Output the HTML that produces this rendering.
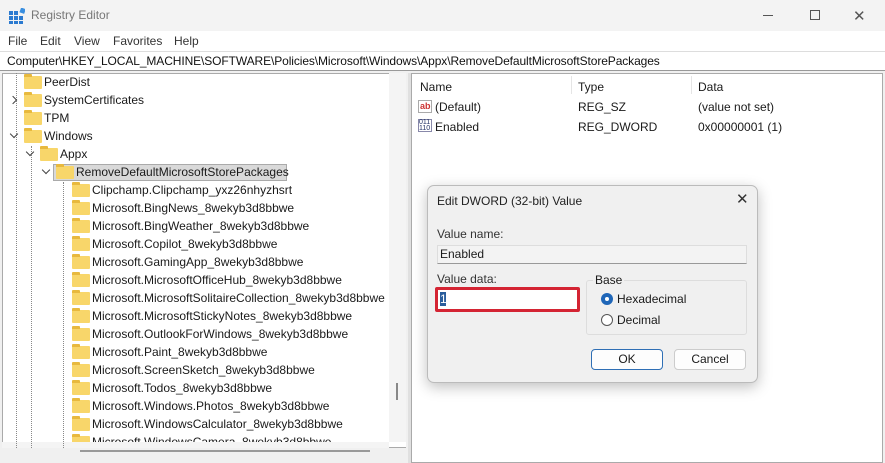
<!DOCTYPE html>
<html><head><style>
*{margin:0;padding:0;box-sizing:border-box}
body{width:885px;height:463px;background:#f0f0f0;font-family:"Liberation Sans",sans-serif;font-size:12px;color:#1a1a1a;position:relative;overflow:hidden}
.a{position:absolute;white-space:nowrap}
.f{position:absolute;width:18px;height:13px;background:#f8d66a;border-radius:1px}
.f:before{content:"";position:absolute;left:0;top:-2px;width:8px;height:3px;background:#e8b93e;border-radius:1px 1px 0 0}
.t{position:absolute;white-space:nowrap;font-size:12px;line-height:16px}
.chev{position:absolute;width:6px;height:6px;border-right:1.3px solid #444;border-bottom:1.3px solid #444}
</style></head><body>
<div class="a" style="left:0;top:0;width:885px;height:31px;background:#f3f3f3"></div>
<svg class="a" style="left:9px;top:8px" width="16" height="16"><rect x="0" y="3" width="4" height="4" fill="#2b7ad0"/><rect x="5" y="3" width="4" height="4" fill="#2b7ad0"/><rect x="0" y="8" width="4" height="4" fill="#2b7ad0"/><rect x="5" y="8" width="4" height="4" fill="#2b7ad0"/><rect x="10" y="8" width="4" height="4" fill="#2b7ad0"/><rect x="0" y="13" width="4" height="3" fill="#2b7ad0"/><rect x="5" y="13" width="4" height="3" fill="#2b7ad0"/><rect x="10" y="13" width="4" height="3" fill="#2b7ad0"/><rect x="11" y="0" width="5" height="5" fill="#3a8fe0" transform="rotate(20 13 3)"/></svg>
<div class="a" style="left:31px;top:8px;font-size:12px;color:#777">Registry Editor</div>
<div class="a" style="left:763px;top:15px;width:10px;height:1px;background:#555"></div>
<div class="a" style="left:810px;top:10px;width:10px;height:10px;border:1px solid #555"></div>
<div class="a" style="left:853px;top:7px;font-size:15px;color:#555">✕</div>
<div class="a" style="left:0;top:31px;width:885px;height:20px;background:#fff"></div>
<div class="a" style="left:8px;top:34px;color:#333">File</div>
<div class="a" style="left:40px;top:34px;color:#333">Edit</div>
<div class="a" style="left:74px;top:34px;color:#333">View</div>
<div class="a" style="left:113px;top:34px;color:#333">Favorites</div>
<div class="a" style="left:174px;top:34px;color:#333">Help</div>
<div class="a" style="left:0;top:51px;width:885px;height:20px;background:#fff;border-top:1px solid #ddd;border-bottom:1px solid #999"></div>
<div class="a" style="left:7px;top:54px;color:#111;letter-spacing:-0.1px">Computer\HKEY_LOCAL_MACHINE\SOFTWARE\Policies\Microsoft\Windows\Appx\RemoveDefaultMicrosoftStorePackages</div>
<div class="a" style="left:2px;top:73px;width:404px;height:375px;background:#fff;border:1px solid #aaa;border-right:none"></div>
<div class="a" style="left:389px;top:73px;width:17px;height:369px;background:#f4f4f4"></div>
<div class="a" style="left:396px;top:383px;width:2px;height:17px;background:#888"></div>
<div class="a" style="left:2px;top:442px;width:387px;height:6px;background:#f4f4f4"></div>
<div class="a" style="left:80px;top:450px;width:290px;height:2px;background:#999"></div>
<div class="a" style="left:408px;top:73px;width:3px;height:390px;background:#e0e0e0"></div>
<div class="a" style="left:16px;top:73px;height:375px;border-left:1px dotted #888"></div>
<div class="a" style="left:31px;top:146px;height:302px;border-left:1px dotted #888"></div>
<div class="a" style="left:63px;top:182px;height:266px;border-left:1px dotted #888"></div>

<div class="f" style="left:24px;top:76px"></div><div class="t" style="left:44px;top:74px">PeerDist</div>
<div class="chev" style="left:10px;top:97px;transform:rotate(-45deg)"></div>
<div class="f" style="left:24px;top:94px"></div><div class="t" style="left:44px;top:92px">SystemCertificates</div>
<div class="f" style="left:24px;top:112px"></div><div class="t" style="left:44px;top:110px">TPM</div>
<div class="chev" style="left:11px;top:131px;transform:rotate(45deg)"></div>
<div class="f" style="left:24px;top:130px"></div><div class="t" style="left:44px;top:128px">Windows</div>
<div class="chev" style="left:27px;top:149px;transform:rotate(45deg)"></div>
<div class="f" style="left:40px;top:148px"></div><div class="t" style="left:60px;top:146px">Appx</div>
<div class="chev" style="left:43px;top:167px;transform:rotate(45deg)"></div>
<div class="a" style="left:53px;top:164px;width:234px;height:17px;background:#d9d9d9;border:1px solid #aaa"></div>
<div class="f" style="left:56px;top:166px"></div><div class="t" style="left:76px;top:164px">RemoveDefaultMicrosoftStorePackages</div>

<div class="f" style="left:72px;top:184px"></div><div class="t" style="left:92px;top:182px">Clipchamp.Clipchamp_yxz26nhyzhsrt</div>
<div class="f" style="left:72px;top:202px"></div><div class="t" style="left:92px;top:200px">Microsoft.BingNews_8wekyb3d8bbwe</div>
<div class="f" style="left:72px;top:220px"></div><div class="t" style="left:92px;top:218px">Microsoft.BingWeather_8wekyb3d8bbwe</div>
<div class="f" style="left:72px;top:238px"></div><div class="t" style="left:92px;top:236px">Microsoft.Copilot_8wekyb3d8bbwe</div>
<div class="f" style="left:72px;top:256px"></div><div class="t" style="left:92px;top:254px">Microsoft.GamingApp_8wekyb3d8bbwe</div>
<div class="f" style="left:72px;top:274px"></div><div class="t" style="left:92px;top:272px">Microsoft.MicrosoftOfficeHub_8wekyb3d8bbwe</div>
<div class="f" style="left:72px;top:292px"></div><div class="t" style="left:92px;top:290px">Microsoft.MicrosoftSolitaireCollection_8wekyb3d8bbwe</div>
<div class="f" style="left:72px;top:310px"></div><div class="t" style="left:92px;top:308px">Microsoft.MicrosoftStickyNotes_8wekyb3d8bbwe</div>
<div class="f" style="left:72px;top:328px"></div><div class="t" style="left:92px;top:326px">Microsoft.OutlookForWindows_8wekyb3d8bbwe</div>
<div class="f" style="left:72px;top:346px"></div><div class="t" style="left:92px;top:344px">Microsoft.Paint_8wekyb3d8bbwe</div>
<div class="f" style="left:72px;top:364px"></div><div class="t" style="left:92px;top:362px">Microsoft.ScreenSketch_8wekyb3d8bbwe</div>
<div class="f" style="left:72px;top:382px"></div><div class="t" style="left:92px;top:380px">Microsoft.Todos_8wekyb3d8bbwe</div>
<div class="f" style="left:72px;top:400px"></div><div class="t" style="left:92px;top:398px">Microsoft.Windows.Photos_8wekyb3d8bbwe</div>
<div class="f" style="left:72px;top:418px"></div><div class="t" style="left:92px;top:416px">Microsoft.WindowsCalculator_8wekyb3d8bbwe</div>
<div class="a" style="left:60px;top:434px;width:329px;height:8px;overflow:hidden"><div class="f" style="left:12px;top:2px"></div><div class="t" style="left:32px;top:0">Microsoft.WindowsCamera_8wekyb3d8bbwe</div></div>

<div class="a" style="left:411px;top:73px;width:472px;height:390px;background:#fff;border:1px solid #aaa"></div>
<div class="a" style="left:571px;top:76px;width:1px;height:18px;background:#e5e5e5"></div>
<div class="a" style="left:691px;top:76px;width:1px;height:18px;background:#e5e5e5"></div>
<div class="a" style="left:420px;top:80px">Name</div>
<div class="a" style="left:578px;top:80px">Type</div>
<div class="a" style="left:698px;top:80px">Data</div>
<div class="a" style="left:418px;top:100px;width:14px;height:13px;border:1px solid #aaa;background:#fff;font-size:9px;line-height:10px;color:#c33;font-weight:bold;padding-left:1px">ab</div>
<div class="a" style="left:435px;top:100px">(Default)</div><div class="a" style="left:578px;top:100px">REG_SZ</div><div class="a" style="left:698px;top:100px">(value not set)</div>
<div class="a" style="left:418px;top:119px;width:14px;height:13px;border:1px solid #88a;background:#fff;font-size:7px;line-height:6px;color:#236">011<br>110</div>
<div class="a" style="left:435px;top:120px">Enabled</div><div class="a" style="left:578px;top:120px">REG_DWORD</div><div class="a" style="left:698px;top:120px">0x00000001 (1)</div>

<div class="a" style="left:427px;top:185px;width:331px;height:198px;background:#f0f0f0;border:1px solid #bbb;border-radius:7px;box-shadow:0 4px 14px rgba(0,0,0,.25)"></div>
<div class="a" style="left:437px;top:194px;color:#222">Edit DWORD (32-bit) Value</div>
<div class="a" style="left:736px;top:190px;font-size:15px;color:#333">✕</div>
<div class="a" style="left:437px;top:227px;color:#333">Value name:</div>
<div class="a" style="left:437px;top:245px;width:310px;height:19px;background:#f3f3f3;border:1px solid #ddd;border-bottom-color:#999"></div>
<div class="a" style="left:440px;top:247px">Enabled</div>
<div class="a" style="left:437px;top:272px;color:#333">Value data:</div>
<div class="a" style="left:435px;top:287px;width:145px;height:25px;border:3px solid #d42433;border-radius:2px;background:#fff"></div>
<div class="a" style="left:440px;top:292px;width:6px;height:14px;background:#2a5d9c;color:#fff;font-size:12px;line-height:14px">1</div>
<div class="a" style="left:586px;top:280px;width:161px;height:55px;border:1px solid #ddd;border-radius:3px"></div>
<div class="a" style="left:593px;top:273px;background:#f0f0f0;padding:0 2px">Base</div>
<div class="a" style="left:601px;top:293px;width:12px;height:12px;border-radius:50%;background:#1f66b8"><div style="margin:4px;width:4px;height:4px;border-radius:50%;background:#fff"></div></div>
<div class="a" style="left:617px;top:292px">Hexadecimal</div>
<div class="a" style="left:601px;top:314px;width:12px;height:12px;border-radius:50%;border:1px solid #555;background:#fff"></div>
<div class="a" style="left:617px;top:313px">Decimal</div>
<div class="a" style="left:591px;top:349px;width:72px;height:21px;background:#fdfdfd;border:1px solid #2f6fb5;border-radius:4px;text-align:center;line-height:19px">OK</div>
<div class="a" style="left:674px;top:349px;width:72px;height:21px;background:#fdfdfd;border:1px solid #ccc;border-radius:4px;text-align:center;line-height:19px">Cancel</div>
</body></html>
